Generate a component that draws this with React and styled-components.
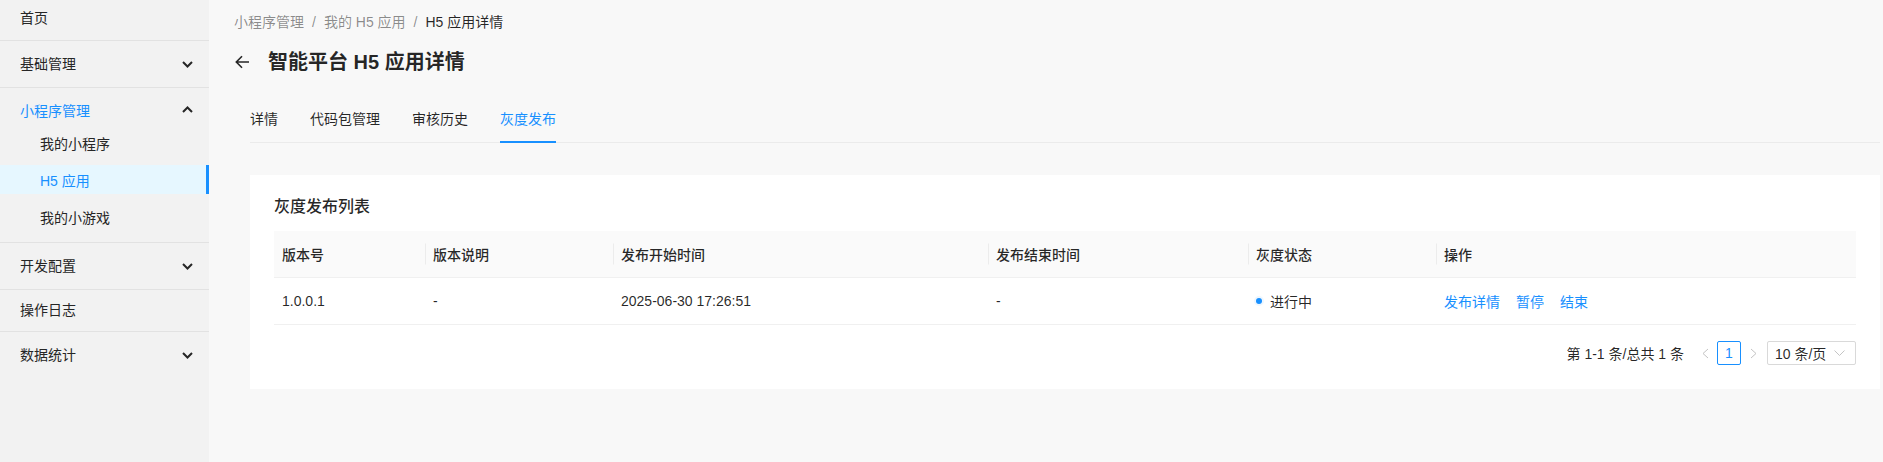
import styled, { createGlobalStyle } from "styled-components";

const GlobalStyle = createGlobalStyle`
  html, body {
    margin: 0;
    padding: 0;
  }
  body {
    background: #f8f8f8;
    font-family: "Liberation Sans", "Noto Sans CJK SC", sans-serif;
    font-size: 14px;
    color: rgba(0, 0, 0, 0.85);
  }
  * {
    box-sizing: border-box;
  }
`;

const BLUE = "#1890ff";

const Layout = styled.div`
  display: flex;
  height: 462px;
  overflow: hidden;
`;

const Sidebar = styled.aside`
  width: 209px;
  flex-shrink: 0;
  background: #f2f2f2;
`;

const MenuItem = styled.div`
  height: ${(p) => p.$h}px;
  display: flex;
  align-items: center;
  justify-content: space-between;
  padding: 0 16px ${(p) => p.$pb || 0}px 20px;
  border-bottom: ${(p) => (p.$last ? "none" : "1px solid #e2e2e2")};
  color: #262626;
  line-height: 22px;
`;

const Group = styled.div`
  border-bottom: 1px solid #e2e2e2;
`;

const GroupHeader = styled.div`
  height: 40px;
  padding: 3px 16px 0 20px;
  display: flex;
  align-items: center;
  justify-content: space-between;
  color: ${BLUE};
`;

const SubList = styled.div`
  display: flex;
  flex-direction: column;
  gap: 8px;
  padding-bottom: 11px;
`;

const SubItem = styled.div`
  height: 29px;
  display: flex;
  align-items: center;
  padding-left: 40px;
  color: ${(p) => (p.$active ? BLUE : "#262626")};
  background: ${(p) => (p.$active ? "#e6f7ff" : "transparent")};
  border-right: 3px solid ${(p) => (p.$active ? BLUE : "transparent")};
`;

const Main = styled.main`
  flex: 1;
  min-width: 0;
  padding: 11px 3px 0 25px;
`;

const Breadcrumb = styled.div`
  display: flex;
  align-items: center;
  height: 22px;
  line-height: 22px;
  color: rgba(0, 0, 0, 0.45);
`;

const Crumb = styled.span`
  color: ${(p) => (p.$current ? "rgba(0, 0, 0, 0.85)" : "rgba(0, 0, 0, 0.45)")};
`;

const Sep = styled.span`
  margin: 0 8px;
  color: rgba(0, 0, 0, 0.45);
`;

const TitleRow = styled.div`
  display: flex;
  align-items: center;
  gap: 18px;
  height: 28px;
  margin-top: 15px;
  margin-left: 1px;
`;

const Title = styled.h1`
  margin: 0;
  font-size: 20px;
  line-height: 28px;
  font-weight: 600;
  color: rgba(0, 0, 0, 0.85);
`;

const Body = styled.div`
  margin-left: 16px;
`;

const TabBar = styled.div`
  display: flex;
  gap: 32px;
  margin-top: 20px;
  border-bottom: 1px solid #ebebeb;
`;

const Tab = styled.div`
  position: relative;
  padding: 12px 0;
  line-height: 22px;
  color: ${(p) => (p.$active ? BLUE : "rgba(0, 0, 0, 0.85)")};

  &::after {
    content: "";
    position: absolute;
    left: 0;
    right: 0;
    bottom: -1px;
    height: 2px;
    background: ${(p) => (p.$active ? BLUE : "transparent")};
  }
`;

const Card = styled.section`
  margin-top: 32px;
  background: #fff;
  padding: 20px 24px 24px;
`;

const CardTitle = styled.div`
  font-size: 16px;
  line-height: 24px;
  font-weight: 500;
  color: rgba(0, 0, 0, 0.85);
`;

const Table = styled.div`
  margin-top: 12px;
`;

const Row = styled.div`
  display: grid;
  grid-template-columns: 151px 188px 375px 260px 188px 1fr;
  height: 47px;
  border-bottom: 1px solid #f0f0f0;
  background: ${(p) => (p.$head ? "#fafafa" : "#fff")};
  font-weight: ${(p) => (p.$head ? 500 : 400)};
`;

const Cell = styled.div`
  position: relative;
  display: flex;
  align-items: center;
  padding: 0 8px;
  color: rgba(0, 0, 0, 0.85);

  ${(p) =>
    p.$divider &&
    `
    &::before {
      content: "";
      position: absolute;
      left: 0;
      top: 50%;
      transform: translateY(-50%);
      width: 1px;
      height: 21px;
      background: #ececec;
    }
  `}
`;

const Dot = styled.span`
  width: 6px;
  height: 6px;
  border-radius: 50%;
  background: ${BLUE};
  box-shadow: 0 0 0 2px #eef7ff;
  margin: 0 8px 0 0;
`;

const Actions = styled.div`
  display: flex;
  gap: 16px;
  color: ${BLUE};
`;

const Pager = styled.div`
  margin-top: 16px;
  display: flex;
  justify-content: flex-end;
  align-items: center;
  height: 24px;
`;

const Total = styled.span`
  margin-right: 9px;
  color: rgba(0, 0, 0, 0.85);
`;

const PageBtn = styled.div`
  width: 24px;
  height: 24px;
  display: flex;
  align-items: center;
  justify-content: center;
  border: 1px solid ${(p) => (p.$active ? BLUE : "transparent")};
  border-radius: 2px;
  color: ${BLUE};
`;

const SizeSelect = styled.div`
  margin-left: 2px;
  width: 89px;
  height: 24px;
  border: 1px solid #d9d9d9;
  border-radius: 2px;
  display: flex;
  align-items: center;
  justify-content: space-between;
  padding: 0 10px 0 7px;
  color: rgba(0, 0, 0, 0.85);
`;

const Chevron = ({ up }) => (
  <svg width="11" height="7" viewBox="0 0 11 7">
    <path
      d={up ? "M1 6L5.5 1.5L10 6" : "M1 1L5.5 5.5L10 1"}
      fill="none"
      stroke="#262626"
      strokeWidth="2"
    />
  </svg>
);

const BackArrow = () => (
  <svg width="15" height="14" viewBox="0 0 15 14">
    <path
      d="M14 7H1.5M7 1.2L1.3 7L7 12.8"
      fill="none"
      stroke="#262626"
      strokeWidth="1.6"
    />
  </svg>
);

const SmallArrow = ({ right }) => (
  <svg width="7" height="11" viewBox="0 0 7 11">
    <path
      d={right ? "M1 1L6 5.5L1 10" : "M6 1L1 5.5L6 10"}
      fill="none"
      stroke="#c4c4c4"
      strokeWidth="1"
    />
  </svg>
);

const SelectArrow = () => (
  <svg width="11" height="6" viewBox="0 0 11 6">
    <path d="M0.5 0.5L5.5 5.5L10.5 0.5" fill="none" stroke="#c4c4c4" strokeWidth="1" />
  </svg>
);

const columns = ["版本号", "版本说明", "发布开始时间", "发布结束时间", "灰度状态", "操作"];

const records = [
  {
    version: "1.0.0.1",
    desc: "-",
    start: "2025-06-30 17:26:51",
    end: "-",
    status: "进行中",
  },
];

export default function App() {
  return (
    <>
      <GlobalStyle />
      <Layout>
        <Sidebar>
          <MenuItem $h={41} $pb={5}>首页</MenuItem>
          <MenuItem $h={47}>
            基础管理
            <Chevron />
          </MenuItem>
          <Group>
            <GroupHeader>
              小程序管理
              <Chevron up />
            </GroupHeader>
            <SubList>
              <SubItem>我的小程序</SubItem>
              <SubItem $active>H5 应用</SubItem>
              <SubItem>我的小游戏</SubItem>
            </SubList>
          </Group>
          <MenuItem $h={47}>
            开发配置
            <Chevron />
          </MenuItem>
          <MenuItem $h={42} $pb={2}>操作日志</MenuItem>
          <MenuItem $h={46} $last>
            数据统计
            <Chevron />
          </MenuItem>
        </Sidebar>

        <Main>
          <Breadcrumb>
            <Crumb>小程序管理</Crumb>
            <Sep>/</Sep>
            <Crumb>我的 H5 应用</Crumb>
            <Sep>/</Sep>
            <Crumb $current>H5 应用详情</Crumb>
          </Breadcrumb>
          <TitleRow>
            <BackArrow />
            <Title>智能平台 H5 应用详情</Title>
          </TitleRow>

          <Body>
            <TabBar>
              <Tab>详情</Tab>
              <Tab>代码包管理</Tab>
              <Tab>审核历史</Tab>
              <Tab $active>灰度发布</Tab>
            </TabBar>

            <Card>
              <CardTitle>灰度发布列表</CardTitle>
              <Table>
                <Row $head>
                  {columns.map((c, i) => (
                    <Cell key={c} $divider={i > 0}>
                      {c}
                    </Cell>
                  ))}
                </Row>
                {records.map((r) => (
                  <Row key={r.version}>
                    <Cell>{r.version}</Cell>
                    <Cell>{r.desc}</Cell>
                    <Cell>{r.start}</Cell>
                    <Cell>{r.end}</Cell>
                    <Cell>
                      <Dot />
                      {r.status}
                    </Cell>
                    <Cell>
                      <Actions>
                        <span>发布详情</span>
                        <span>暂停</span>
                        <span>结束</span>
                      </Actions>
                    </Cell>
                  </Row>
                ))}
              </Table>
              <Pager>
                <Total>第 1-1 条/总共 1 条</Total>
                <PageBtn>
                  <SmallArrow />
                </PageBtn>
                <PageBtn $active>1</PageBtn>
                <PageBtn>
                  <SmallArrow right />
                </PageBtn>
                <SizeSelect>
                  10 条/页
                  <SelectArrow />
                </SizeSelect>
              </Pager>
            </Card>
          </Body>
        </Main>
      </Layout>
    </>
  );
}
